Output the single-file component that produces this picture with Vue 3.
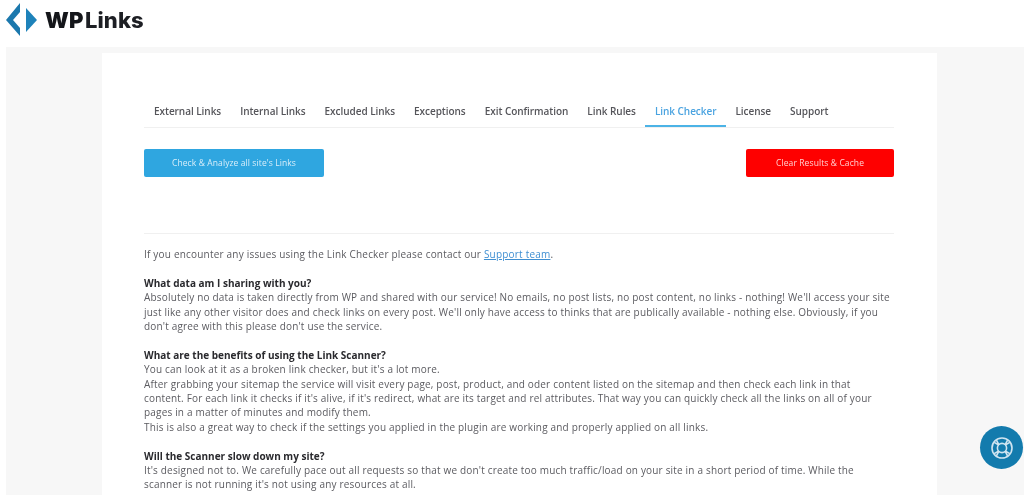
<script setup>
const tabs = ['External Links','Internal Links','Excluded Links','Exceptions','Exit Confirmation','Link Rules','Link Checker','License','Support']
const sections = [
  { title: 'What data am I sharing with you?', lines: [
    "Absolutely no data is taken directly from WP and shared with our service! No emails, no post lists, no post content, no links - nothing! We'll access your site",
    "just like any other visitor does and check links on every post. We'll only have access to thinks that are publically available - nothing else. Obviously, if you",
    "don't agree with this please don't use the service."
  ]},
  { title: 'What are the benefits of using the Link Scanner?', lines: [
    "You can look at it as a broken link checker, but it's a lot more.",
    "After grabbing your sitemap the service will visit every page, post, product, and oder content listed on the sitemap and then check each link in that",
    "content. For each link it checks if it's alive, if it's redirect, what are its target and rel attributes. That way you can quickly check all the links on all of your",
    "pages in a matter of minutes and modify them.",
    "This is also a great way to check if the settings you applied in the plugin are working and properly applied on all links."
  ]},
  { title: 'Will the Scanner slow down my site?', lines: [
    "It's designed not to. We carefully pace out all requests so that we don't create too much traffic/load on your site in a short period of time. While the",
    "scanner is not running it's not using any resources at all."
  ]}
]
</script>

<template>
  <div class="page">
    <header class="top">
      <svg class="mark" width="32" height="34" viewBox="0 0 32 34">
        <path d="M14 0 L0 17 L14 33 L14 25 L7 17 L14 9 Z" fill="#1b78ad"/>
        <path d="M20 5 L31 17 L20 29 Z" fill="#1e82ba"/>
      </svg>
      <span class="brand">WP <span class="brand-rest">Links</span></span>
    </header>
    <main class="bg">
      <section class="panel">
        <nav class="tabs">
          <a v-for="t in tabs" :key="t" class="tab" :class="{ active: t === 'Link Checker' }">{{ t }}</a>
        </nav>
        <div class="actions">
          <button class="btn blue">Check &amp; Analyze all site's Links</button>
          <button class="btn red">Clear Results &amp; Cache</button>
        </div>
        <div class="content">
          <p class="intro">If you encounter any issues using the Link Checker please contact our <a class="link">Support team</a>.</p>
          <div v-for="s in sections" :key="s.title" class="sec">
            <div class="head">{{ s.title }}</div>
            <div v-for="l in s.lines" :key="l" class="line">{{ l }}</div>
          </div>
        </div>
      </section>
    </main>
    <button class="help" aria-label="Help">
      <svg width="24" height="24" viewBox="0 0 24 24" fill="none" stroke="#cfe4f0" stroke-width="1.6">
        <circle cx="12" cy="12" r="10"/>
        <circle cx="12" cy="12" r="4.6"/>
        <path d="M4.2 6.4l4.6 2.6M6.4 4.2l2.6 4.6M19.8 6.4l-4.6 2.6M17.6 4.2l-2.6 4.6M4.2 17.6l4.6-2.6M6.4 19.8l2.6-4.6M19.8 17.6l-4.6-2.6M17.6 19.8l-2.6-4.6"/>
      </svg>
    </button>
  </div>
</template>

<style>
html, body { margin: 0; overflow: hidden; background: #fff; }
</style>

<style scoped>
.page { width: 1024px; height: 495px; overflow: hidden; position: relative; font-family: "Open Sans", "Liberation Sans", sans-serif; filter: blur(0.4px); }
.top { height: 47px; display: flex; align-items: flex-start; padding: 3px 0 0 6px; gap: 7px; background: #fff; box-sizing: border-box; }
.mark { display: block; }
.brand { font-family: "Inter", sans-serif; font-size: 22px; line-height: 35px; font-weight: 900; letter-spacing: 0.1px; word-spacing: -3px; color: #14161a; }
.brand-rest { font-weight: 800; color: #1d1f24; }
.bg { margin-left: 6px; background: #f7f7f7; height: 448px; padding: 6px 87px 0 96px; box-sizing: border-box; }
.panel { background: #fff; height: 100%; padding: 0 43px 0 42px; box-sizing: border-box; }
.tabs { display: flex; padding: 42px 0 0 0.5px; height: 32px; border-bottom: 1px solid #f0f0f0; box-sizing: content-box; }
.tab { font-size: 10px; letter-spacing: -0.05px; line-height: 33px; font-weight: 600; color: #55555a; padding: 0 9.5px; height: 30px; }
.tab.active { color: #4aa3e0; border-bottom: 2px solid #4cb3e6; }
.actions { display: flex; justify-content: space-between; margin-top: 21px; padding-bottom: 56px; border-bottom: 1px solid #f0f0f0; }
.btn { border: 0; border-radius: 2px; height: 28px; color: #fff; font: 8.5px "Open Sans", sans-serif; letter-spacing: 0.1px; padding: 0 0 1px; }
.blue { width: 180px; background: #2fa6e0; color: #d8eefa; }
.red { width: 148px; background: #fe0000; color: #ffd0d0; }
.content { padding-top: 13px; font-size: 10px; line-height: 14.4px; letter-spacing: 0.18px; color: #5b5b60; white-space: nowrap; }
.intro { margin: 0 0 14.4px; letter-spacing: 0.2px; }
.link { color: #3f8fd2; text-decoration: underline; }
.sec { margin-bottom: 14.4px; }
.head { font-weight: 700; color: #2a2a2e; letter-spacing: 0; }
.help { position: absolute; left: 980px; top: 426px; width: 43px; height: 43px; border-radius: 50%; border: 0; background: #137bad; display: flex; align-items: center; justify-content: center; padding: 0; }
</style>
